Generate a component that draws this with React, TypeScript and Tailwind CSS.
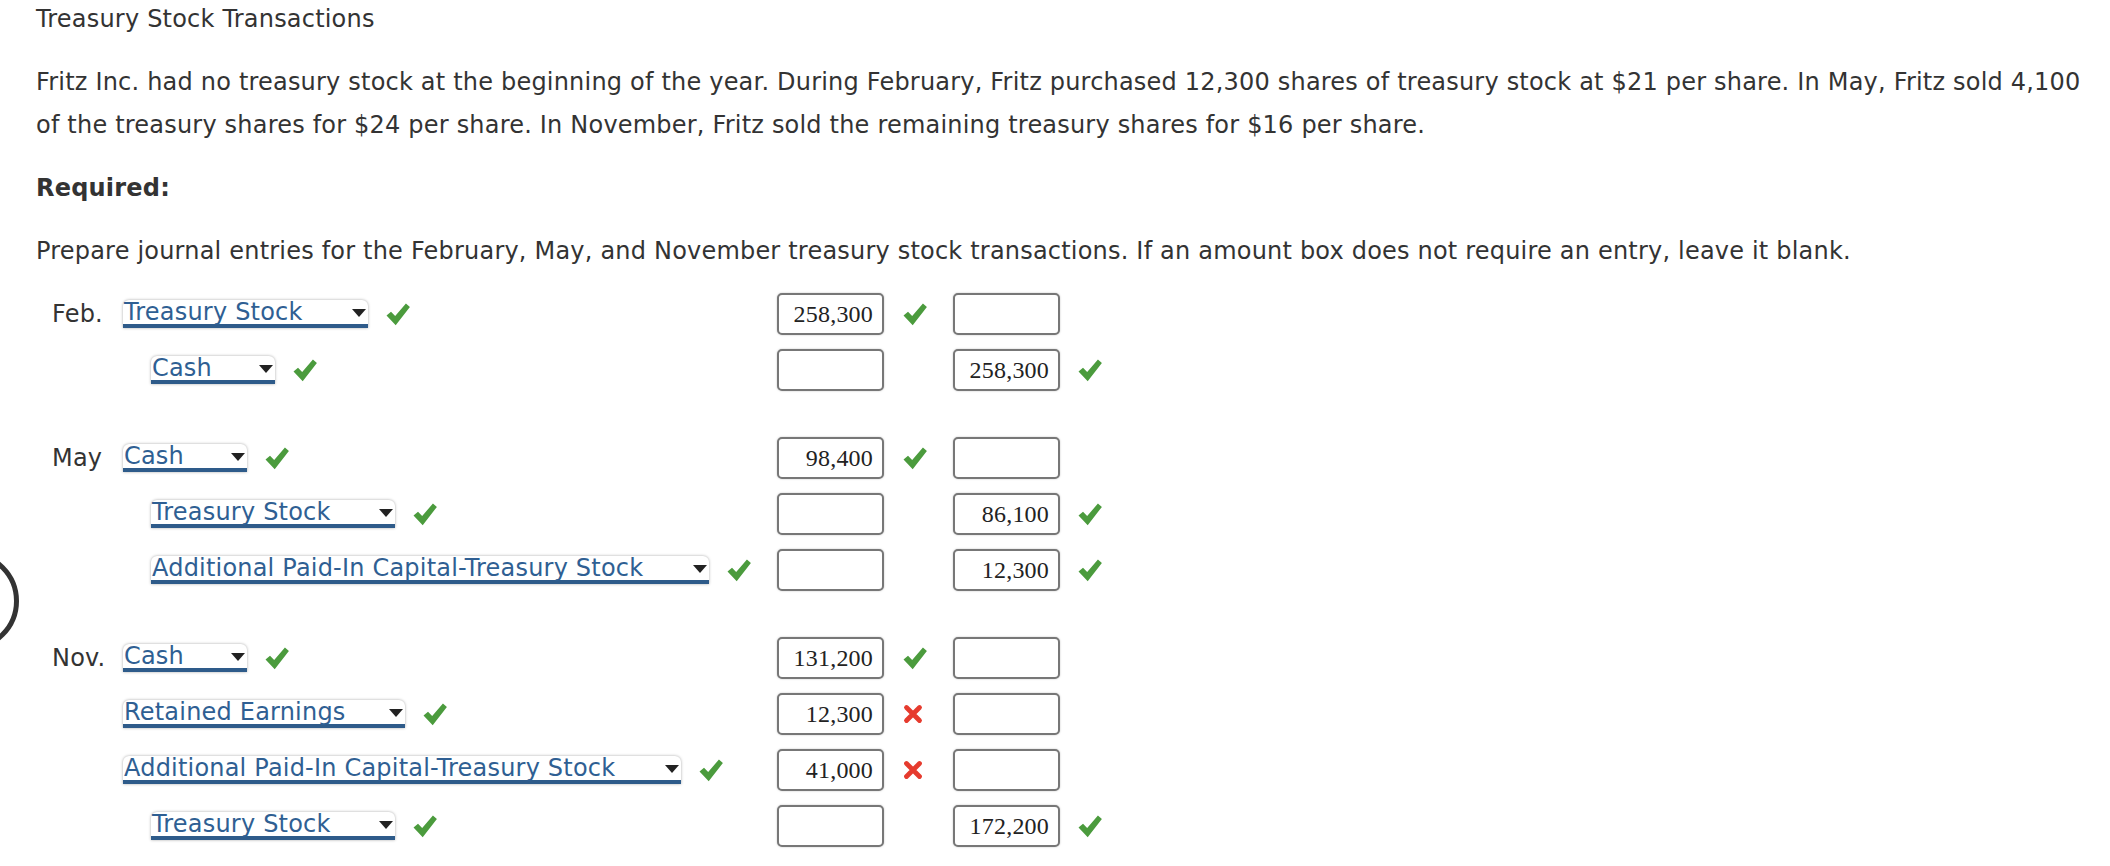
import React from 'react';

type Mark = 'ok' | 'bad' | null;

interface Entry {
  account: string;
  width: string;
  indent?: boolean;
  debit?: string;
  debitMark?: Mark;
  credit?: string;
  creditMark?: Mark;
}

const groups: Array<{ label: string; rows: Entry[] }> = [
  {
    label: 'Feb.',
    rows: [
      { account: 'Treasury Stock', width: 'w-[245px]', debit: '258,300', debitMark: 'ok' },
      { account: 'Cash', width: 'w-[124px]', indent: true, credit: '258,300', creditMark: 'ok' },
    ],
  },
  {
    label: 'May',
    rows: [
      { account: 'Cash', width: 'w-[124px]', debit: '98,400', debitMark: 'ok' },
      { account: 'Treasury Stock', width: 'w-[244px]', indent: true, credit: '86,100', creditMark: 'ok' },
      {
        account: 'Additional Paid-In Capital-Treasury Stock',
        width: 'w-[558px]',
        indent: true,
        credit: '12,300',
        creditMark: 'ok',
      },
    ],
  },
  {
    label: 'Nov.',
    rows: [
      { account: 'Cash', width: 'w-[124px]', debit: '131,200', debitMark: 'ok' },
      { account: 'Retained Earnings', width: 'w-[282px]', debit: '12,300', debitMark: 'bad' },
      {
        account: 'Additional Paid-In Capital-Treasury Stock',
        width: 'w-[558px]',
        debit: '41,000',
        debitMark: 'bad',
      },
      { account: 'Treasury Stock', width: 'w-[244px]', indent: true, credit: '172,200', creditMark: 'ok' },
    ],
  },
];

const Check = () => (
  <svg width="24" height="23" viewBox="0 0 23 22">
    <path d="M0.5 12 L4.8 8.3 L8.8 12.5 L19.1 0.4 L22.9 3.7 L9.3 21.3 Z" fill="#4b9b3d" />
  </svg>
);

const Cross = () => (
  <svg width="20" height="20" viewBox="0 0 20 20">
    <path d="M3.5 3.5 L16.5 16.5 M16.5 3.5 L3.5 16.5" stroke="#e63b2e" strokeWidth="4.8" strokeLinecap="round" />
  </svg>
);

const MarkIcon = ({ mark }: { mark?: Mark }) => {
  if (mark === 'ok') return <Check />;
  if (mark === 'bad') return <Cross />;
  return null;
};

const AccountSelect = ({ label, width }: { label: string; width: string }) => (
  <div
    className={`${width} relative h-[28px] bg-white rounded-t-[6px] shadow-[0_0_3px_rgba(0,0,0,0.35)] border-b-4 border-[#2e5b8a] text-[#2f5f93] text-[24px] tracking-[0.2px] leading-[24px] pl-[1px] whitespace-nowrap`}
  >
    {label}
    <span className="absolute right-[2px] top-[9px] w-0 h-0 border-l-[7px] border-r-[7px] border-t-[8px] border-l-transparent border-r-transparent border-t-[#222]" />
  </div>
);

const AmountBox = ({ value }: { value?: string }) => (
  <div className="w-[107px] h-[42px] border-2 border-[#777] rounded-[5px] bg-white shadow-[0_0_2px_rgba(0,0,0,0.25)] flex items-center justify-end pr-[9px] font-['Liberation_Serif',serif] text-[24px] text-[#222]">
    {value}
  </div>
);

function JournalRow({ label, entry }: { label?: string; entry: Entry }) {
  return (
    <div className="flex items-center h-[42px]">
      <div className="w-[71px] text-[24px] tracking-[0.2px] text-[#333]">{label}</div>
      <div className={`w-[654px] flex items-center ${entry.indent ? 'pl-[28px]' : ''}`}>
        <AccountSelect label={entry.account} width={entry.width} />
        <div className="ml-[18px] flex items-center">
          <Check />
        </div>
      </div>
      <AmountBox value={entry.debit} />
      <div className="w-[69px] pl-[19px] flex items-center">
        <MarkIcon mark={entry.debitMark} />
      </div>
      <AmountBox value={entry.credit} />
      <div className="ml-[18px] flex items-center">
        <MarkIcon mark={entry.creditMark} />
      </div>
    </div>
  );
}

export default function App() {
  return (
    <div className="relative w-[2110px] min-h-[866px] overflow-hidden bg-white font-['DejaVu_Sans',sans-serif] text-[#333] text-[24px] tracking-[0.2px]">
      <div className="pl-[36px] pr-[20px] pt-[1.5px]">
        <h1 className="text-[24px] leading-[35px] font-normal">Treasury Stock Transactions</h1>
        <p className="mt-[24.5px] leading-[43px]">
          Fritz Inc. had no treasury stock at the beginning of the year. During February, Fritz purchased 12,300 shares
          of treasury stock at $21 per share. In May, Fritz sold 4,100 of the treasury shares for $24 per share. In
          November, Fritz sold the remaining treasury shares for $16 per share.
        </p>
        <p className="mt-[20px] leading-[43px] font-bold">Required:</p>
        <p className="mt-[20px] leading-[43px]">
          Prepare journal entries for the February, May, and November treasury stock transactions. If an amount box
          does not require an entry, leave it blank.
        </p>

        <div className="mt-[20px] ml-[16px] flex flex-col gap-[46px]">
          {groups.map((group) => (
            <div key={group.label} className="flex flex-col gap-[14px]">
              {group.rows.map((entry, index) => (
                <JournalRow key={index} label={index === 0 ? group.label : undefined} entry={entry} />
              ))}
            </div>
          ))}
        </div>
      </div>

      {/* partly hidden round button at the left edge */}
      <div className="absolute left-[-81px] top-[551px] w-[100px] h-[100px] rounded-full border-[5px] border-[#333]" />
    </div>
  );
}
